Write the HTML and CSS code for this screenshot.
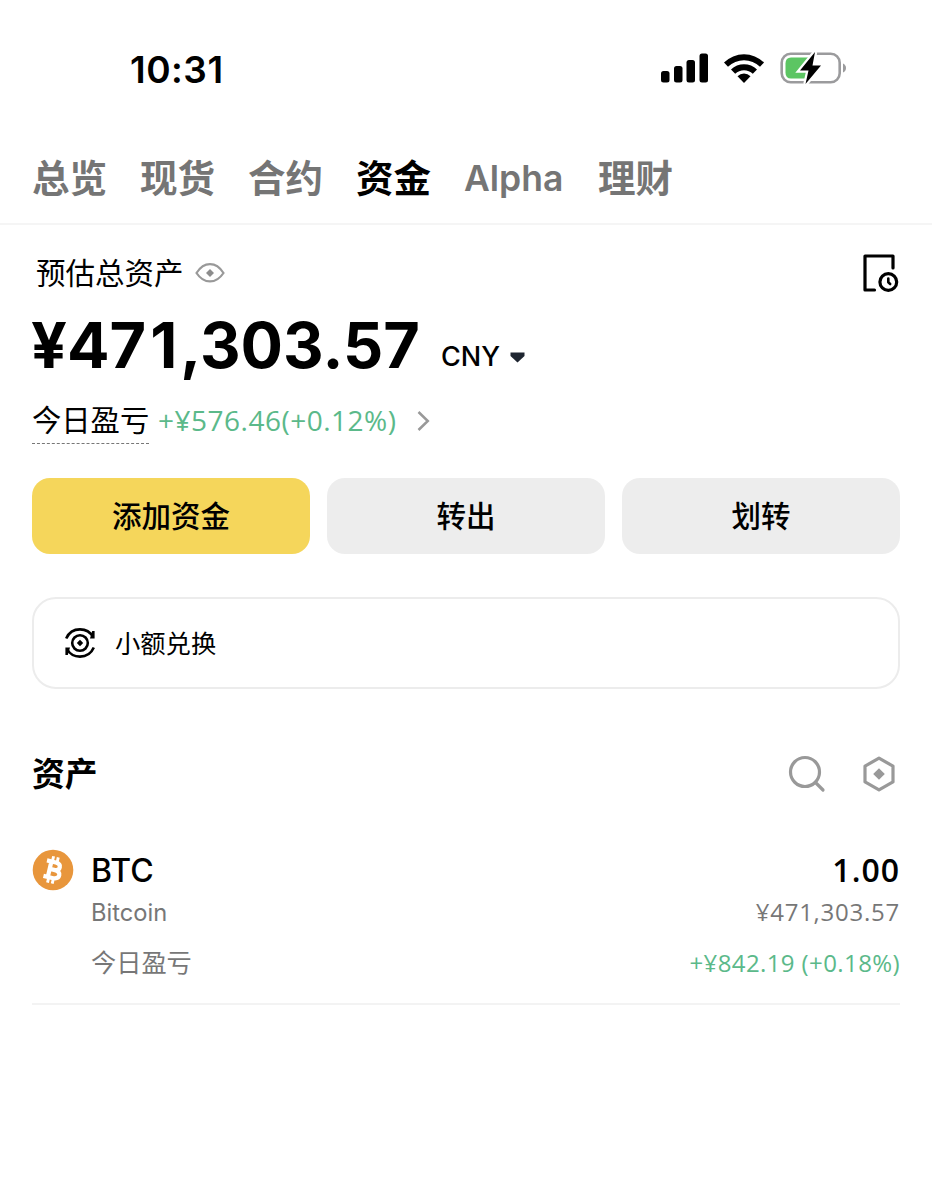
FILE: index.html
```
<!doctype html>
<html lang="zh-CN">
<head>
<meta charset="utf-8">
<title>资金</title>
<link rel="stylesheet" href="styles.css">
</head>
<body>
<div class="status">
	<span class="time">10:31</span>
	<div class="status-icons">
		<svg class="signal" width="48" height="30" viewBox="0 0 48 30">
			<rect x="0" y="18" width="8.5" height="11.500" rx="2.500"/>
			<rect x="13" y="13" width="8.500" height="16.500" rx="2.500"/>
			<rect x="25.500" y="7" width="8.500" height="22.500" rx="2.500"/>
			<rect x="38.500" y="0.500" width="8.500" height="29" rx="2.500"/>
		</svg>
		<svg class="wifi" width="42" height="30" viewBox="0 0 42 30">
			<path d="M1 9.500a28.500 28.500 0 0 1 40 0l-4 4.300a23 23 0 0 0-32 0z"/>
			<path d="M8 16.500a18.500 18.500 0 0 1 26 0l-4.200 4.300a12.700 12.700 0 0 0-17.600 0z"/>
			<path d="M14.500 23.300a9.200 9.200 0 0 1 13 0L21 30z"/>
		</svg>
		<svg class="battery" width="68" height="34" viewBox="0 0 68 34">
			<rect x="1.700" y="2.700" width="58" height="28.600" rx="9" fill="none" stroke="#9b9b9d" stroke-width="2.600"/>
			<path d="M63 12.500q3 1.500 3 4.500t-3 4.500z" fill="#9b9b9d"/>
			<path d="M11 6.500h17v21H11q-5.500 0-5.500-6v-9q0-6 5.500-6z" fill="#5cc563"/>
			<path d="M35 1L20 19.500h8.500l-3 13.500L41 14.500h-8.500z" fill="#000" stroke="#fff" stroke-width="4.500" paint-order="stroke"/>
		</svg>
	</div>
</div>

<ul class="tabs">
	<li>总览</li>
	<li>现货</li>
	<li>合约</li>
	<li class="ac">资金</li>
	<li class="alpha">Alpha</li>
	<li>理财</li>
</ul>

<div class="main">
	<div class="total">
		<div class="total-head">
			<span class="label">预估总资产</span>
			<svg width="30" height="22" viewBox="0 0 30 22" fill="none" stroke="#999" stroke-width="2.200">
				<path d="M1.500 11C9-.8 21-.8 28.500 11C21 22.300 9 22.300 1.500 11z"/>
				<path d="M15 7l4 4-4 4-4-4z" fill="#8d8d8d" stroke="none"/>
			</svg>
		</div>
		<svg class="history" width="36" height="38" viewBox="0 0 36 38" fill="none" stroke="#000" stroke-width="3.200" stroke-linecap="round" stroke-linejoin="round">
			<path d="M11.500 36H2V2h28v12"/>
			<circle cx="25.300" cy="28" r="8.400"/>
			<path d="M25.300 24.500v3.800l1.900 1.700" stroke-width="2.600"/>
		</svg>
	</div>
	<div class="amount">
		<b>¥47<i>1</i>,303.57</b>
		<span class="unit">CNY</span>
		<svg width="15" height="11" viewBox="0 0 15 11"><path d="M.5 .5h14v3.500L7.500 10.500 .5 4z" fill="#1e2530"/></svg>
	</div>
	<div class="profit">
		<span class="profit-name">今日盈亏</span>
		<span class="profit-num">+¥576.46(+0.12%)</span>
		<svg width="13" height="20" viewBox="0 0 13 20" fill="none" stroke="#999" stroke-width="2.500"><path d="M1.500 1l9.300 9-9.300 9"/></svg>
	</div>

	<div class="btns">
		<div class="btn add">添加资金</div>
		<div class="btn">转出</div>
		<div class="btn">划转</div>
	</div>

	<div class="convert">
		<svg width="32" height="32" viewBox="0 0 32 32" fill="none" stroke="#000" stroke-width="2.600">
			<path d="M2.200 11.500C4.800 5.600 10 2.400 16 2.400c5.500 0 10.300 2.600 13 7.600M29.800 20.500C27.200 26.400 22 29.600 16 29.600c-5.500 0-10.300-2.600-13-7.600"/>
			<path d="M28.200 4h2.400v7.500h-4.600zM3.800 28H1.400v-7.500H6z" fill="#000" stroke="none"/>
			<circle cx="16" cy="16" r="7.800"/>
			<path d="M16 12.800l3.200 3.200-3.200 3.200-3.200-3.200z" fill="#000" stroke="none"/>
		</svg>
		<span>小额兑换</span>
	</div>

	<div class="assets-head">
		<h3>资产</h3>
		<svg class="search" width="38" height="38" viewBox="0 0 38 38" fill="none" stroke="#999" stroke-width="3.200" stroke-linecap="round">
			<circle cx="17" cy="17" r="14.500"/>
			<path d="M27.500 27.500l7.500 7.500"/>
		</svg>
		<svg class="setting" width="34" height="38" viewBox="0 0 34 38" fill="none" stroke="#999" stroke-width="3.200" stroke-linejoin="round">
			<path d="M17 3.200l14 7.900v15.800L17 34.800 3 26.900V11.100z"/>
			<path d="M17 13.200l5.800 5.800-5.800 5.800-5.800-5.800z" fill="#999" stroke="none"/>
		</svg>
	</div>

	<div class="coin">
		<svg class="logo" width="42" height="42" viewBox="0 0 42 42">
			<circle cx="21" cy="21" r="20.300" fill="#e8963c"/>
			<g transform="rotate(13 21 21)" fill="none" stroke="#fff">
				<path d="M13 13H22q5 0 5 3.800t-5 3.800h-4.500M22 20.700q6.300 0 6.300 4.100t-6.300 4.100h-9M17.500 13v16" stroke-width="4.200"/>
				<path d="M18.500 7.500v5M23.300 7.500v5M18.500 29.500v5M23.300 29.500v5" stroke-width="2.900"/>
			</g>
		</svg>
		<div class="coin-info">
			<div class="row name"><span class="sym">BTC</span><span class="num">1.00</span></div>
			<div class="row sub"><span class="full">Bitcoin</span><span class="val">¥471,303.57</span></div>
			<div class="row day"><span>今日盈亏</span><span class="up">+¥842.19 (+0.18%)</span></div>
		</div>
	</div>
</div>
</body>
</html>
```
FILE: styles.css
```
*{ margin:0; padding:0; box-sizing:border-box}
body{ width:932px; height:1200px; overflow:hidden; background:#fff; color:#000; font-family:Inter,"Noto Sans CJK SC",sans-serif; white-space:nowrap}
ul{ list-style:none}
svg{ display:block; flex:none}

.status{ height:140px; padding:53px 85px 0 130px; display:flex; justify-content:space-between}
.time{ height:32px; line-height:34px; font-size:37px; font-weight:600; letter-spacing:.5px}
.status-icons{ display:flex}
.signal{ margin-right:14px}
.wifi{ margin-right:15px}
.battery{ margin-top:-2px; margin-right:-1px}

.tabs{ height:85px; padding:16px 32px 0; display:flex; gap:33px; border-bottom:2px solid #f5f5f5; color:#757575; font-size:37.5px; font-weight:700; line-height:46px}
.tabs li.ac{ color:#000}
.tabs li.alpha{ width:101px; font-size:35.5px; font-weight:600}

.main{ padding:0 32px}
.total{ height:80px; padding:29px 1px 0 4px; display:flex; justify-content:space-between}
.total-head{ height:37px; display:flex; align-items:center; gap:11px}
.label{ margin-top:-3px; font-size:29.5px}

.profit-num,.num,.val,.up{ font-family:"Open Sans",sans-serif}
.amount{ height:80px; display:flex; align-items:flex-start}
.amount b{ width:410px; margin-left:-1px; line-height:80px; font-size:63px; font-weight:700}
.amount i{ padding:0 3px 0 4px; font-style:normal}
.unit{ width:69px; margin-top:32px; line-height:40px; font-size:27px; font-weight:500}
.amount svg{ margin-top:47px}

.profit{ height:93px; padding-top:15px; display:flex}
.profit-name{ width:117px; height:44px; line-height:42px; font-size:29.3px; border-bottom:1px dashed #777}
.profit-num{ width:268px; padding-left:9px; line-height:40px; font-size:28px; letter-spacing:.5px; color:#5bb98a}
.profit svg{ margin-top:11px}

.btns{ display:flex; gap:17px}
.btn{ flex:1; height:76px; border-radius:18px; background:#ededed; line-height:76px; text-align:center; font-size:29.5px; font-weight:500}
.btn.add{ background:#f5d65b}

.convert{ height:92px; margin-top:43px; padding:0 30px; display:flex; align-items:center; gap:19px; border:2px solid #ececec; border-radius:24px; font-size:25.3px}
.convert span{ margin-top:-2px}

.assets-head{ height:84px; margin-top:43px; display:flex; align-items:center}
.assets-head h3{ flex:1; margin-top:-6px; font-size:32.8px; font-weight:700}
.search{ margin-right:36px}
.setting{ margin-right:4px}

.coin{ height:189px; padding-top:33px; display:flex; border-bottom:2px solid #f3f3f3}
.coin-info{ flex:1; margin-left:17px}
.row{ height:42px; display:flex; justify-content:space-between}
.name{ height:44px; line-height:44px; font-size:32px; font-weight:500}
.name .num{ line-height:42px; font-weight:600; letter-spacing:1px}
.sub{ line-height:39px; font-size:24px; color:#777}
.sub .val{ line-height:37px; letter-spacing:.75px}
.sub .full{ font-size:23.7px}
.day{ margin-top:7px; line-height:42px; font-size:25.2px; color:#777}
.day .up{ font-size:24px; letter-spacing:.4px; color:#5bb98a}
```
